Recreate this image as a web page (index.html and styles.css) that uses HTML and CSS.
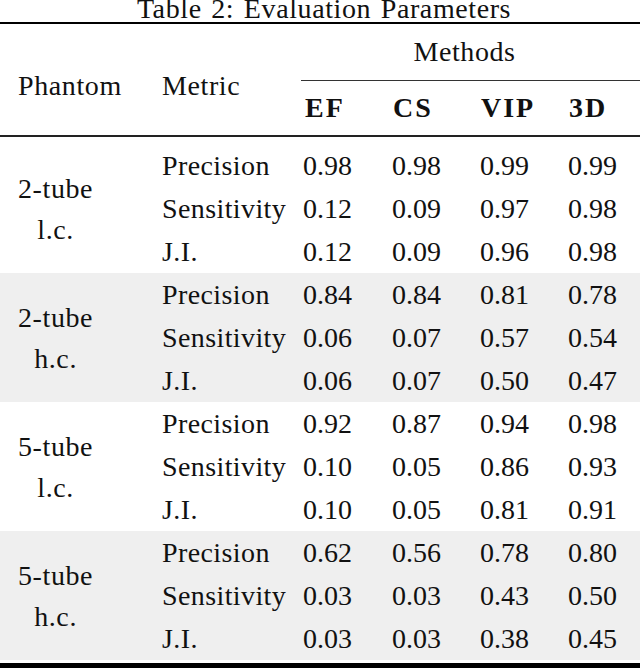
FILE: index.html
```html
<!DOCTYPE html>
<html>
<head>
<meta charset="utf-8">
<link rel="stylesheet" href="styles.css">
</head>
<body>
<div class="page">
  <div class="caption">Table 2: Evaluation Parameters</div>
  <div class="rule rule-top"></div>
  <div class="head">
    <div class="h-phantom">Phantom</div>
    <div class="h-metric">Metric</div>
    <div class="h-methods">Methods</div>
    <div class="cmid"></div>
    <div class="h-m h-ef">EF</div>
    <div class="h-m">CS</div>
    <div class="h-m">VIP</div>
    <div class="h-m">3D</div>
  </div>
  <div class="rule rule-mid"></div>
  <div class="body">
    <div class="group">
      <div class="phantom"><span class="ph-label">2-tube<br>l.c.</span></div>
      <div class="metric">Precision</div><div class="val">0.98</div><div class="val">0.98</div><div class="val">0.99</div><div class="val">0.99</div>
      <div class="metric">Sensitivity</div><div class="val">0.12</div><div class="val">0.09</div><div class="val">0.97</div><div class="val">0.98</div>
      <div class="metric">J.I.</div><div class="val">0.12</div><div class="val">0.09</div><div class="val">0.96</div><div class="val">0.98</div>
    </div>
    <div class="group shaded">
      <div class="phantom"><span class="ph-label">2-tube<br>h.c.</span></div>
      <div class="metric">Precision</div><div class="val">0.84</div><div class="val">0.84</div><div class="val">0.81</div><div class="val">0.78</div>
      <div class="metric">Sensitivity</div><div class="val">0.06</div><div class="val">0.07</div><div class="val">0.57</div><div class="val">0.54</div>
      <div class="metric">J.I.</div><div class="val">0.06</div><div class="val">0.07</div><div class="val">0.50</div><div class="val">0.47</div>
    </div>
    <div class="group">
      <div class="phantom"><span class="ph-label">5-tube<br>l.c.</span></div>
      <div class="metric">Precision</div><div class="val">0.92</div><div class="val">0.87</div><div class="val">0.94</div><div class="val">0.98</div>
      <div class="metric">Sensitivity</div><div class="val">0.10</div><div class="val">0.05</div><div class="val">0.86</div><div class="val">0.93</div>
      <div class="metric">J.I.</div><div class="val">0.10</div><div class="val">0.05</div><div class="val">0.81</div><div class="val">0.91</div>
    </div>
    <div class="group shaded">
      <div class="phantom"><span class="ph-label">5-tube<br>h.c.</span></div>
      <div class="metric">Precision</div><div class="val">0.62</div><div class="val">0.56</div><div class="val">0.78</div><div class="val">0.80</div>
      <div class="metric">Sensitivity</div><div class="val">0.03</div><div class="val">0.03</div><div class="val">0.43</div><div class="val">0.50</div>
      <div class="metric">J.I.</div><div class="val">0.03</div><div class="val">0.03</div><div class="val">0.38</div><div class="val">0.45</div>
    </div>
  </div>
  <div class="rule rule-bottom"></div>
</div>
</body>
</html>
```
FILE: styles.css
```css
html, body {
  margin: 0;
  padding: 0;
  background: #ffffff;
}
body {
  font-family: "Liberation Serif", "Times New Roman", serif;
  font-size: 28px;
  color: #111111;
  overflow: hidden;
}
.page {
  width: 640px;
}
.caption {
  height: 22px;
  line-height: 18px;
  text-align: center;
  padding-left: 8px;
  letter-spacing: 0.6px;
  word-spacing: 2px;
  white-space: nowrap;
}
.rule {
  background: #000;
}
.rule-top {
  height: 2px;
}
.rule-mid {
  height: 2px;
  background: #222;
}
.rule-bottom {
  height: 5px;
  margin-top: 3px;
}
.head,
.group {
  display: grid;
  grid-template-columns: 162px 141px 89px 88px 88px 72px;
}
.head {
  grid-template-rows: 56px 1px 54px;
}
.h-phantom,
.h-metric {
  grid-row: 1 / 4;
  line-height: 31px;
  padding-top: 46px;
  letter-spacing: 0.6px;
}
.h-phantom {
  grid-column: 1;
  padding-left: 18px;
}
.h-metric {
  grid-column: 2;
}
.h-methods {
  grid-column: 3 / 7;
  grid-row: 1;
  text-align: center;
  line-height: 56px;
  padding-right: 14px;
  letter-spacing: 0.6px;
}
.cmid {
  grid-column: 3 / 7;
  grid-row: 2;
  background: #333;
  margin-left: -2px;
}
.h-m {
  grid-row: 3;
  font-weight: bold;
  line-height: 54px;
  letter-spacing: 2px;
  padding-left: 1px;
}
.h-ef {
  grid-column: 3;
  padding-left: 2px;
}
.body {
  padding-top: 7px;
}
.group {
  grid-template-rows: repeat(3, 43px);
}
.group + .group {
  margin-top: 0;
}
.shaded {
  background: #efefef;
}
.phantom {
  grid-column: 1;
  grid-row: 1 / 4;
  display: flex;
  align-items: center;
  padding-left: 18px;
}
.ph-label {
  display: inline-block;
  text-align: center;
  line-height: 41px;
  letter-spacing: 0.6px;
}
.metric {
  grid-column: 2;
  line-height: 43px;
  letter-spacing: 0.4px;
  white-space: nowrap;
}
.val {
  line-height: 43px;
}
.group:first-child {
  height: 129px;
}
```
